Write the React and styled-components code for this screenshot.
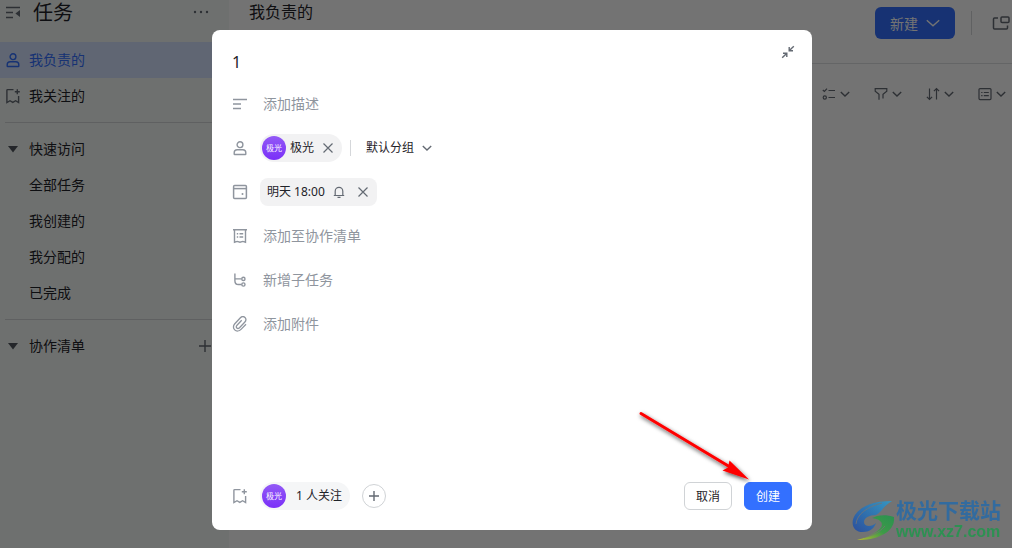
import React, { useState } from "react"
import styled, { createGlobalStyle } from "styled-components"

const GlobalStyle = createGlobalStyle`
  * {
    box-sizing: border-box;
  }
  body {
    margin: 0;
    overflow: hidden;
    font-family: "Noto Sans", "Noto Sans CJK SC", sans-serif;
    font-size: 14px;
    color: #1f2329;
  }
  button,
  input {
    font: inherit;
    color: inherit;
    padding: 0;
    border: 0;
    background: none;
  }
  button {
    cursor: pointer;
  }
  svg {
    display: block;
    flex: none;
  }
`

const Page = styled.div`
  display: flex;
  min-height: 100vh;
  background: #ffffff;
`

const Sidebar = styled.nav`
  flex: none;
  width: 229px;
  background: #f4f9f7;
`

const SidebarHeader = styled.div`
  display: flex;
  align-items: center;
  gap: 12px;
  height: 42px;
  padding: 0 20px 16px 5px;
  color: #646a73;
`

const SidebarTitle = styled.h1`
  flex: 1;
  margin: 0;
  font-size: 20px;
  font-weight: 400;
  line-height: 26px;
  color: #1f2329;
`

const IconButton = styled.button`
  display: flex;
  align-items: center;
  justify-content: center;
  color: #646a73;
`

const NavItem = styled.a`
  display: flex;
  align-items: center;
  gap: 8px;
  height: 36px;
  padding-left: ${({ $nested }) => ($nested ? "29px" : "5px")};
  line-height: 20px;
  text-decoration: none;
  color: ${({ $active }) => ($active ? "#3370ff" : "#1f2329")};
  background: ${({ $active }) => ($active ? "#d5e2ff" : "transparent")};

  svg {
    color: ${({ $active }) => ($active ? "#3370ff" : "#646a73")};
  }
`

const NavGroup = styled.div`
  display: flex;
  align-items: center;
  height: 36px;
  padding: 0 17px 0 5px;
`

const GroupToggle = styled.button`
  display: flex;
  flex: 1;
  align-items: center;
  gap: 8px;
  line-height: 20px;

  svg {
    color: #51565d;
  }
`

const NavDivider = styled.hr`
  height: 1px;
  margin: 8px 0 8px 5px;
  border: 0;
  background: #d2d5d8;
`

const Main = styled.main`
  flex: 1;
  min-width: 0;
`

const MainHeader = styled.header`
  display: flex;
  justify-content: space-between;
  height: 64px;
  padding: 0 2px 0 20px;
  border-bottom: 1px solid #dee0e3;
`

const MainTitle = styled.h2`
  margin: 0;
  font-size: 16px;
  font-weight: 400;
  line-height: 24px;
`

const HeaderActions = styled.div`
  display: flex;
  align-items: center;
  gap: 16px;
  height: 46px;
`

const NewButton = styled.button`
  display: flex;
  align-items: center;
  gap: 8px;
  height: 32px;
  padding: 0 15px;
  border-radius: 6px;
  color: #ffffff;
  background: #3370ff;
`

const VerticalLine = styled.span`
  width: 1px;
  height: ${({ $tall }) => ($tall ? "24px" : "16px")};
  background: #d5d7da;
`

const Toolbar = styled.div`
  display: flex;
  align-items: center;
  justify-content: flex-end;
  gap: 24px;
  height: 60px;
  padding-right: 6px;
`

const ToolButton = styled(IconButton)`
  gap: 4px;
`

const Overlay = styled.div`
  position: fixed;
  inset: 0;
  display: flex;
  justify-content: center;
  align-items: flex-start;
  padding: 30px 0 18px 12px;
  background: rgba(0, 0, 0, 0.55);
`

const Dialog = styled.section`
  position: relative;
  display: flex;
  flex-direction: column;
  width: 100%;
  max-width: 600px;
  height: 100%;
  padding: 12px 20px 20px;
  border-radius: 8px;
  background: #ffffff;
`

const DialogHeader = styled.div`
  display: flex;
  align-items: flex-start;
  height: 40px;
`

const TitleInput = styled.input`
  flex: 1;
  min-width: 0;
  height: 40px;
  font-size: 16px;
  outline: none;
`

const CollapseButton = styled(IconButton)`
  width: 20px;
  height: 20px;
  margin-right: -6px;
`

const Row = styled.div`
  display: flex;
  align-items: center;
  gap: 12px;
  height: 44px;
  color: #8f959e;
`

const DescriptionInput = styled.input`
  flex: 1;
  padding-left: 3px;
  line-height: 20px;
  outline: none;

  &::placeholder {
    color: #8f959e;
    opacity: 1;
  }
`

const AddButton = styled.button`
  padding-left: 3px;
  line-height: 20px;
  color: #8f959e;
`

const Chip = styled.div`
  display: flex;
  align-items: center;
  gap: ${({ $gap }) => $gap || "4px"};
  height: 28px;
  padding: ${({ $square }) => ($square ? "0 8px 0 7px" : "0 8px 0 2px")};
  border-radius: ${({ $square }) => ($square ? "8px" : "14px")};
  font-size: 12px;
  line-height: 20px;
  color: #1f2329;
  background: ${({ $cool }) => ($cool ? "#f5f6f7" : "#f2f2f3")};
`

const Avatar = styled.span`
  width: 24px;
  height: 24px;
  border-radius: 50%;
  font-size: 8px;
  line-height: 24px;
  text-align: center;
  color: #ffffff;
  background: linear-gradient(#935af6, #7a2ff8);
`

const RemoveButton = styled(IconButton)`
  margin-left: 4px;
`

const Assignee = styled.div`
  display: flex;
  align-items: center;
  gap: 8px;
`

const GroupSelect = styled.button`
  display: flex;
  align-items: center;
  gap: 8px;
  padding-left: 7px;
  font-size: 12px;
  line-height: 20px;
  color: #1f2329;

  svg {
    color: #646a73;
  }
`

const DialogFooter = styled.footer`
  display: flex;
  align-items: center;
  gap: 12px;
  height: 28px;
  margin-top: auto;
  color: #8f959e;
`

const AddFollower = styled(IconButton)`
  width: 24px;
  height: 24px;
  border: 1px solid #d0d3d6;
  border-radius: 50%;
`

const FooterActions = styled.div`
  display: flex;
  gap: 12px;
  margin-left: auto;
`

const ActionButton = styled.button`
  width: 48px;
  height: 28px;
  border: 1px solid ${({ $primary }) => ($primary ? "#3370ff" : "#d0d3d6")};
  border-radius: 6px;
  font-size: 12px;
  color: ${({ $primary }) => ($primary ? "#ffffff" : "#1f2329")};
  background: ${({ $primary }) => ($primary ? "#3370ff" : "#ffffff")};
`

const PointerArrow = styled.svg`
  position: absolute;
  right: 56px;
  bottom: 40px;
  pointer-events: none;
`

const Watermark = styled.div`
  position: fixed;
  right: 11px;
  bottom: 6px;
  display: flex;
  align-items: center;
`

const WatermarkText = styled.div`
  display: flex;
  flex-direction: column;
  font-size: 21px;
  font-weight: 700;
  line-height: 24px;
  color: #326b9f;
`

const WatermarkUrl = styled.span`
  font-family: "Liberation Sans", sans-serif;
  font-size: 16px;
  line-height: 20px;
  color: #2d9152;
`

const Icon = ({ size = 16, width = 1.2, children }) => (
  <svg
    width={size}
    height={size}
    viewBox={`0 0 ${size} ${size}`}
    fill="none"
    stroke="currentColor"
    strokeWidth={width}
    aria-hidden="true"
  >
    {children}
  </svg>
)

const UserIcon = () => (
  <Icon width={1.4}>
    <circle cx="8" cy="4.7" r="2.9" />
    <path d="M2.2 14v-1.3c0-1.8 1.2-3 3-3h5.6c1.8 0 3 1.2 3 3V14c0 .3-.2.5-.5.5H2.7c-.3 0-.5-.2-.5-.5z" />
  </Icon>
)

const BookmarkIcon = () => (
  <Icon width={1.4}>
    <path d="M8.5 1.6H2.6c-.4 0-.7.3-.7.7v12.300L5 12.700l2.800 1.700 2.800-1.700 3 1.900V8" />
    <path d="M12.300 1.200v5M9.800 3.700h5" />
  </Icon>
)

const ChevronIcon = ({ size = 10 }) => (
  <Icon size={size} width={1.4}>
    <path d={`M.8 ${size * 0.3}L${size / 2} ${size * 0.7}L${size - 0.8} ${size * 0.3}`} />
  </Icon>
)

const CaretIcon = () => (
  <Icon width={0}>
    <path d="M3 5h10L8 11.5z" fill="currentColor" />
  </Icon>
)

const PlusIcon = ({ size = 14 }) => (
  <Icon size={size} width={1.4}>
    <path d={`M${size / 2} 1v${size - 2}M1 ${size / 2}h${size - 2}`} />
  </Icon>
)

const CloseIcon = () => (
  <Icon size={12}>
    <path d="M1.5 1.5l9 9M10.5 1.5l-9 9" />
  </Icon>
)

const tools = [
  {
    label: "状态",
    icon: (
      <Icon size={14}>
        <path d="M.8 3l1.600 1.500L5 1.700M6.500 3.500H13M6.500 10.500H13" />
        <circle cx="2.8" cy="10.5" r="1.6" />
      </Icon>
    ),
  },
  {
    label: "筛选",
    icon: (
      <Icon size={14}>
        <path d="M5 12.700V7.400L1.200 4.200V1.600h11.600v2.600L9 7.400v4" />
      </Icon>
    ),
  },
  {
    label: "排序",
    icon: (
      <Icon size={14}>
        <path d="M3.500 1.500v11M.9 9.800l2.600 2.700 2.600-2.700M10.500 12.500v-11M7.900 4.200l2.600-2.700 2.600 2.700" />
      </Icon>
    ),
  },
  {
    label: "字段",
    icon: (
      <Icon size={14}>
        <rect x="1" y="1.6" width="12" height="11" rx="1" />
        <path d="M3.200 5.500h1.300M3.200 8.700h1.300M5.800 5.500h5M5.800 8.700h5" />
      </Icon>
    ),
  },
]

const quickLinks = ["全部任务", "我创建的", "我分配的", "已完成"]

const addRows = [
  {
    label: "添加至协作清单",
    icon: (
      <Icon width={1.4}>
        <path d="M1 1.700h14M2.500 1.700v12.500l2.700-.8 2.800.8 2.800-.8 2.700.8V1.700" />
        <path d="M4.800 5.700h1.400M4.800 9h1.400M7.500 5.700h3.700M7.500 9h3.700" />
      </Icon>
    ),
  },
  {
    label: "新增子任务",
    icon: (
      <Icon width={1.4}>
        <path d="M2.900 1.500v7.200c0 2.200 1.300 3.800 3.500 3.800h3.200M2.900 6.900h6.700" />
        <circle cx="11.4" cy="6.9" r="1.6" />
        <circle cx="11.4" cy="12.5" r="1.6" />
      </Icon>
    ),
  },
  {
    label: "添加附件",
    icon: (
      <Icon width={1.3}>
        <path d="M14 8.200l-5 5.200c-1.800 1.900-4.600 2.100-6.300.5-1.700-1.600-1.700-4.300.1-6.200l5.600-5.900c1.300-1.400 3.300-1.600 4.600-.4 1.300 1.200 1.200 3.200-.1 4.600l-5.400 5.700c-.9.900-2 1-2.700.3-.8-.7-.7-1.900.2-2.800l4.700-4.900" />
      </Icon>
    ),
  },
]

const App = () => {
  const [title, setTitle] = useState("1")

  return (
    <>
      <GlobalStyle />
      <Page>
        <Sidebar>
          <SidebarHeader>
            <Icon width={1.4}>
              <path d="M1 2.500h14M1 7.500h7M1 12.500h7" />
              <path d="M15 5v7l-4.600-3.500z" fill="currentColor" stroke="none" />
            </Icon>
            <SidebarTitle>任务</SidebarTitle>
            <IconButton aria-label="更多">
              <Icon width={0}>
                <g fill="currentColor">
                  <circle cx="2" cy="7" r="1.2" />
                  <circle cx="8" cy="7" r="1.2" />
                  <circle cx="14" cy="7" r="1.2" />
                </g>
              </Icon>
            </IconButton>
          </SidebarHeader>
          <NavItem href="#mine" $active>
            <UserIcon />
            我负责的
          </NavItem>
          <NavItem href="#following">
            <BookmarkIcon />
            我关注的
          </NavItem>
          <NavDivider />
          <NavGroup>
            <GroupToggle>
              <CaretIcon />
              快速访问
            </GroupToggle>
          </NavGroup>
          {quickLinks.map(link => (
            <NavItem key={link} href="#quick" $nested>
              {link}
            </NavItem>
          ))}
          <NavDivider />
          <NavGroup>
            <GroupToggle>
              <CaretIcon />
              协作清单
            </GroupToggle>
            <IconButton aria-label="新建清单">
              <PlusIcon />
            </IconButton>
          </NavGroup>
        </Sidebar>

        <Main>
          <MainHeader>
            <MainTitle>我负责的</MainTitle>
            <HeaderActions>
              <NewButton>
                新建
                <ChevronIcon size={14} />
              </NewButton>
              <VerticalLine $tall />
              <IconButton aria-label="小窗">
                <Icon size={22} width={1.5}>
                  <path d="M10 6H6.500c-.6 0-1 .4-1 1v9c0 .6.400 1 1 1h12c.6 0 1-.4 1-1v-2.500" />
                  <rect x="13" y="5" width="8" height="5.5" rx="1" />
                </Icon>
              </IconButton>
            </HeaderActions>
          </MainHeader>
          <Toolbar>
            {tools.map(({ label, icon }) => (
              <ToolButton key={label} aria-label={label}>
                {icon}
                <ChevronIcon />
              </ToolButton>
            ))}
          </Toolbar>
        </Main>
      </Page>

      <Overlay>
        <Dialog role="dialog" aria-label="新建任务">
          <DialogHeader>
            <TitleInput
              aria-label="任务标题"
              value={title}
              onChange={e => setTitle(e.target.value)}
            />
            <CollapseButton aria-label="收起">
              <Icon size={14} width={1.4}>
                <path d="M12.800 1.200L8.400 5.600M8.200 2v3.800H12M1.200 12.800l4.400-4.400M2 8.200h3.800V12" />
              </Icon>
            </CollapseButton>
          </DialogHeader>

          <Row>
            <Icon width={1.5}>
              <path d="M1 3.500h14M1 8h8M1 12.500h8" />
            </Icon>
            <DescriptionInput aria-label="添加描述" placeholder="添加描述" />
          </Row>
          <Row>
            <UserIcon />
            <Assignee>
              <Chip>
                <Avatar>极光</Avatar>
                极光
                <RemoveButton aria-label="移除极光">
                  <CloseIcon />
                </RemoveButton>
              </Chip>
              <VerticalLine />
              <GroupSelect>
                默认分组
                <ChevronIcon />
              </GroupSelect>
            </Assignee>
          </Row>
          <Row>
            <Icon width={1.5}>
              <rect x="1.6" y="1.6" width="12.8" height="12.8" rx="1" />
              <path d="M1.600 4.600h12.800" />
              <circle cx="10.5" cy="10" r="1" fill="currentColor" stroke="none" />
            </Icon>
            <Chip $square $gap="8px">
              明天 18:00
              <IconButton aria-label="提醒">
                <Icon size={12}>
                  <path d="M.8 9.500h10.400M2.200 9.500V5.200a3.800 3.800 0 0 1 7.600 0v4.300M4.500 11.400h3" />
                </Icon>
              </IconButton>
              <RemoveButton aria-label="移除时间">
                <CloseIcon />
              </RemoveButton>
            </Chip>
          </Row>
          {addRows.map(({ label, icon }) => (
            <Row key={label}>
              {icon}
              <AddButton>{label}</AddButton>
            </Row>
          ))}

          <DialogFooter>
            <BookmarkIcon />
            <Chip $cool $gap="10px">
              <Avatar>极光</Avatar>1 人关注
            </Chip>
            <AddFollower aria-label="添加关注人">
              <PlusIcon size={12} />
            </AddFollower>
            <FooterActions>
              <ActionButton>取消</ActionButton>
              <ActionButton $primary>创建</ActionButton>
            </FooterActions>
          </DialogFooter>

          <PointerArrow width="124" height="84" viewBox="0 0 124 84" aria-hidden="true">
            <defs>
              <filter id="arrow-shadow" x="-20%" y="-20%" width="140%" height="150%">
                <feDropShadow dx="1" dy="2" stdDeviation="2" floodColor="#000" floodOpacity="0.7" />
              </filter>
            </defs>
            <g filter="url(#arrow-shadow)" fill="#fe0000">
              <path d="M9 7.500L98 61" stroke="#fe0000" strokeWidth="3" strokeLinecap="round" />
              <path d="M117 73.500L90.500 64.500 96 61.500 97.500 54.500z" />
            </g>
          </PointerArrow>
        </Dialog>
      </Overlay>

      <Watermark>
        <svg width="44" height="44" viewBox="4 2 44 44" aria-hidden="true">
          <defs>
            <linearGradient id="swoosh-blue" x1="0" y1="1" x2="1" y2="0">
              <stop offset="0" stopColor="#2c4f9c" />
              <stop offset="1" stopColor="#3596c2" />
            </linearGradient>
            <linearGradient id="swoosh-green" x1="0" y1="1" x2="1" y2="0">
              <stop offset="0" stopColor="#b5b832" />
              <stop offset="0.5" stopColor="#3d9a48" />
              <stop offset="1" stopColor="#2a9150" />
            </linearGradient>
          </defs>
          <path
            d="M44 5C27 5 14 9 7 19c-5 8-2 17 8 17 6 0 11-3 13-9-4 4-12 4-12-1 0-4 5-7 12-7 7-4 6-8 16-14z"
            fill="url(#swoosh-blue)"
          />
          <path
            d="M24 22c5-3 14-4 22-1 1 9-5 15-12 18-7 4-15 5-25 5 8-2 14-5 19-8 8-5 9-12-4-14z"
            fill="url(#swoosh-green)"
          />
          <path
            d="M34 7C19 11 9 18 8 28M12 42c10-1 19-5 25-12"
            fill="none"
            stroke="#737373"
            strokeWidth="0.8"
          />
        </svg>
        <WatermarkText>
          极光下载站
          <WatermarkUrl>www.xz7.com</WatermarkUrl>
        </WatermarkText>
      </Watermark>
    </>
  )
}

export default App
